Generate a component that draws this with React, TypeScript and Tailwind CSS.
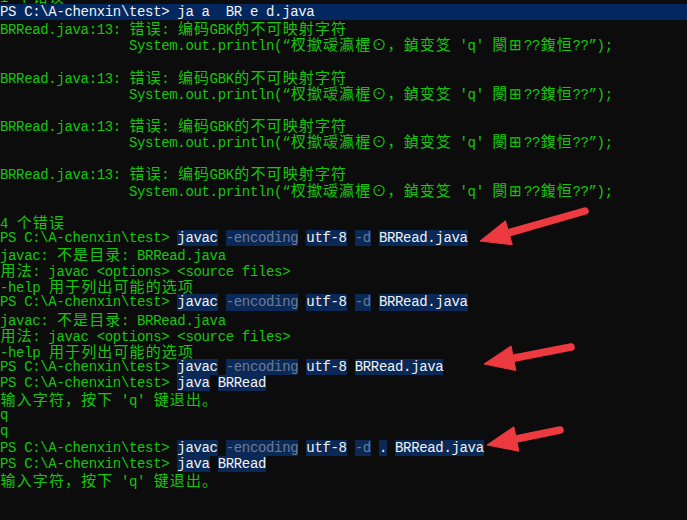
import { ReactNode } from "react";

type Seg = { t: string; k?: "hl" | "dim" };

const PROMPT = "PS C:\\A-chenxin\\test> ";
const GARBLED =
  "                System.out.println(“杈撳叆瀛楃⊙，鍞变笅 'q' 閿⊞??鍑恒??”);";

const isWide = (c: string) => /[\u2E80-\u9FFF\uFF00-\uFFEF\u2299\u229E]/.test(c);

function Txt({ s }: { s: string }) {
  const out: ReactNode[] = [];
  let run = "";
  const flush = () => {
    if (run) {
      out.push(<span key={out.length}>{run}</span>);
      run = "";
    }
  };
  for (const c of s) {
    if (isWide(c)) {
      flush();
      out.push(
        <span
          key={out.length}
          className="inline-block w-[16.13px] text-center font-['Noto_Sans_CJK_SC',sans-serif] text-[15px] tracking-normal"
        >
          {c}
        </span>
      );
    } else {
      run += c;
    }
  }
  flush();
  return <>{out}</>;
}

const plain = (t: string): Seg[] => [{ t }];

// prompt followed by highlighted tokens, spaces between them stay dark
const cmd = (...tokens: string[]): Seg[] => {
  const segs: Seg[] = [{ t: PROMPT }];
  tokens.forEach((tok, i) => {
    if (i > 0) segs.push({ t: " " });
    segs.push({ t: tok, k: tok.startsWith("-") ? "dim" : "hl" });
  });
  return segs;
};

const lines: Seg[][] = [
  plain("1 个错误"),
  plain(PROMPT + "ja a  BR e d.java"),
  plain("BRRead.java:13: 错误: 编码GBK的不可映射字符"),
  plain(GARBLED),
  plain(""),
  plain("BRRead.java:13: 错误: 编码GBK的不可映射字符"),
  plain(GARBLED),
  plain(""),
  plain("BRRead.java:13: 错误: 编码GBK的不可映射字符"),
  plain(GARBLED),
  plain(""),
  plain("BRRead.java:13: 错误: 编码GBK的不可映射字符"),
  plain(GARBLED),
  plain(""),
  plain("4 个错误"),
  cmd("javac", "-encoding", "utf-8", "-d", "BRRead.java"),
  plain("javac: 不是目录: BRRead.java"),
  plain("用法: javac <options> <source files>"),
  plain("-help 用于列出可能的选项"),
  cmd("javac", "-encoding", "utf-8", "-d", "BRRead.java"),
  plain("javac: 不是目录: BRRead.java"),
  plain("用法: javac <options> <source files>"),
  plain("-help 用于列出可能的选项"),
  cmd("javac", "-encoding", "utf-8", "BRRead.java"),
  cmd("java", "BRRead"),
  plain("输入字符，按下 'q' 键退出。"),
  plain("q"),
  plain("q"),
  cmd("javac", "-encoding", "utf-8", "-d", ".", "BRRead.java"),
  cmd("java", "BRRead"),
  plain("输入字符，按下 'q' 键退出。"),
];

function Row({ segs, bar }: { segs: Seg[]; bar?: boolean }) {
  return (
    <div
      className={`h-[16.13px] whitespace-pre leading-[16.13px] ${
        bar ? "bg-[#02285f] text-[#f2f2f2]" : "text-[#16c60c]"
      }`}
    >
      {segs.map((s, i) =>
        s.k ? (
          <span
            key={i}
            className={`inline-block bg-[#0b2956] ${
              s.k === "dim" ? "text-[#6b7b98]" : "text-[#f2f2f2]"
            }`}
          >
            <Txt s={s.t} />
          </span>
        ) : (
          <Txt key={i} s={s.t} />
        )
      )}
    </div>
  );
}

function Arrow({
  tip,
  tail,
}: {
  tip: [number, number];
  tail: [number, number];
}) {
  const dx = tail[0] - tip[0];
  const dy = tail[1] - tip[1];
  const len = Math.hypot(dx, dy);
  const ux = dx / len;
  const uy = dy / len;
  const nx = -uy;
  const ny = ux;
  const head = 30;
  const half = 12.5;
  const bx = tip[0] + head * ux;
  const by = tip[1] + head * uy;
  const sx = tip[0] + (head - 4) * ux;
  const sy = tip[1] + (head - 4) * uy;
  return (
    <g fill="#ec3a40" stroke="#ec3a40">
      <line x1={sx} y1={sy} x2={tail[0]} y2={tail[1]} strokeWidth={7.5} strokeLinecap="round" />
      <polygon
        points={`${tip[0]},${tip[1]} ${bx + half * nx},${by + half * ny} ${bx - half * nx},${by - half * ny}`}
        strokeWidth={1}
        strokeLinejoin="round"
      />
    </g>
  );
}

export default function App() {
  return (
    <div className="relative h-[520px] w-[687px] overflow-hidden bg-[#0c0c0c] font-['Liberation_Mono',monospace] text-[14px] tracking-[-0.34px]">
      <div className="-mt-[12px] flex flex-col">
        {lines.map((segs, i) => (
          <Row key={i} segs={segs} bar={i === 1} />
        ))}
      </div>
      <svg
        className="pointer-events-none absolute inset-0"
        width={687}
        height={520}
        viewBox="0 0 687 520"
      >
        <Arrow tip={[480, 241]} tail={[585, 211]} />
        <Arrow tip={[484, 364]} tail={[571, 347]} />
        <Arrow tip={[487, 445]} tail={[560, 430]} />
      </svg>
    </div>
  );
}
